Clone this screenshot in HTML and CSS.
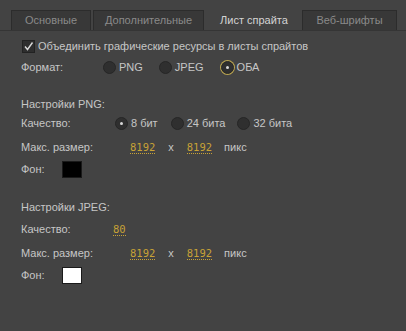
FILE: index.html
```html
<!DOCTYPE html>
<html lang="ru">
<head>
    <meta charset="UTF-8">
    <title>Параметры экспорта</title>
    <link rel="stylesheet" href="styles.css">
</head>
<body>
    <div class="tabs">
        <div class="tab">Основные</div>
        <div class="tab">Дополнительные</div>
        <div class="tab active">Лист спрайта</div>
        <div class="tab">Веб-шрифты</div>
    </div>

    <div class="panel">
        <label class="row check-row">
            <span class="checkbox">
                <svg width="11" height="11" viewBox="0 0 11 11"><path d="M2 5.5 L4.5 8.5 L9.5 1.5" fill="none" stroke="#d8d8d8" stroke-width="1.4"/></svg>
            </span>
            Объединить графические ресурсы в листы спрайтов
        </label>

        <div class="row format-row">
            <span class="label w-format">Формат:</span>
            <span class="radio"></span><span class="opt o-png">PNG</span>
            <span class="radio"></span><span class="opt o-jpeg">JPEG</span>
            <span class="radio on focus"></span><span class="opt">ОБА</span>
        </div>

        <div class="section">
            <div class="row title">Настройки PNG:</div>
            <div class="row q-row">
                <span class="label w-quality">Качество:</span>
                <span class="radio on"></span><span class="opt o-8">8 бит</span>
                <span class="radio"></span><span class="opt o-24">24 бита</span>
                <span class="radio"></span><span class="opt">32 бита</span>
            </div>
            <div class="row size-row">
                <span class="label w-size">Макс. размер:</span>
                <span class="num">8192</span>
                <span class="times">x</span>
                <span class="num">8192</span>
                <span class="unit">пикс</span>
            </div>
            <div class="row bg-row">
                <span class="label w-bg">Фон:</span>
                <span class="swatch black"></span>
            </div>
        </div>

        <div class="section jpeg">
            <div class="row title">Настройки JPEG:</div>
            <div class="row jq-row">
                <span class="label w-jq">Качество:</span>
                <span class="num">80</span>
            </div>
            <div class="row size-row">
                <span class="label w-size">Макс. размер:</span>
                <span class="num">8192</span>
                <span class="times">x</span>
                <span class="num">8192</span>
                <span class="unit">пикс</span>
            </div>
            <div class="row bg-row">
                <span class="label w-bg">Фон:</span>
                <span class="swatch white"></span>
            </div>
        </div>
    </div>
</body>
</html>
```

FILE: styles.css
```css
* {
    margin: 0;
    padding: 0;
    box-sizing: border-box;
}

body {
    background-color: #434343;
    color: #c6c6c6;
    font-family: 'Liberation Sans', Arial, sans-serif;
    font-size: 11px;
    width: 406px;
    height: 331px;
    overflow: hidden;
}

.tabs {
    display: flex;
    padding: 10px 0 0 11px;
    gap: 2px;
    border-bottom: 1px solid #353535;
}

.tab {
    height: 20px;
    line-height: 19px;
    text-align: center;
    background-color: #383838;
    border: 1px solid #2c2c2c;
    border-bottom: none;
    color: #8a8a8a;
}

.tab:nth-child(1) { width: 80px; }
.tab:nth-child(2) { width: 111px; }
.tab:nth-child(3) { width: 92px; margin-left: 2px; }
.tab:nth-child(4) { width: 95px; }

.tab.active {
    background-color: #434343;
    border-color: #434343;
    color: #d4d4d4;
}

.panel {
    padding: 6px 0 0 21px;
}

.row {
    display: flex;
    align-items: center;
    height: 18px;
}

.check-row {
    margin-left: 1px;
}

.checkbox {
    display: inline-flex;
    align-items: center;
    justify-content: center;
    width: 13px;
    height: 13px;
    margin-right: 3px;
    background-color: #2e2e2e;
    border: 1px solid #222;
}

.label { flex: none; }
.w-format { width: 82px; }
.w-quality { width: 94px; }
.w-size { width: 109px; }
.w-bg { width: 41px; }
.w-jq { width: 92px; }

.radio {
    flex: none;
    width: 13px;
    height: 13px;
    border-radius: 50%;
    background-color: #2f2f2f;
    border: 1px solid #262626;
    margin-right: 3px;
    display: inline-flex;
    align-items: center;
    justify-content: center;
}

.radio.on::after {
    content: '';
    width: 3px;
    height: 3px;
    border-radius: 50%;
    background-color: #d8d8d8;
}

.radio.focus {
    box-shadow: 0 0 0 1px #b9a450;
}

.opt { margin-right: 14px; }
.o-png { margin-right: 16px; }
.o-jpeg { margin-right: 17px; }
.o-8 { margin-right: 13px; }
.o-24 { margin-right: 12px; }

.format-row { margin-top: 3px; }

/* вертикальные отступы подогнаны под макет */
.section { margin-top: 19px; }
.section.jpeg { margin-top: 20px; }
.q-row { margin-top: 1px; }
.size-row { margin-top: 6px; }
.bg-row { margin-top: 4px; }
.jq-row { margin-top: 4px; }

.num {
    font-family: 'DejaVu Sans Mono', monospace;
    font-size: 10.5px;
    color: #c8a236;
    border-bottom: 1px dotted #c8a236;
    line-height: 12px;
}

.times { margin: 0 13px; }
.unit { margin-left: 12px; }

.swatch {
    width: 20px;
    height: 17px;
    border: 1px solid #1a1a1a;
}

.swatch.black { background-color: #000; }
.swatch.white { background-color: #fff; }
```
